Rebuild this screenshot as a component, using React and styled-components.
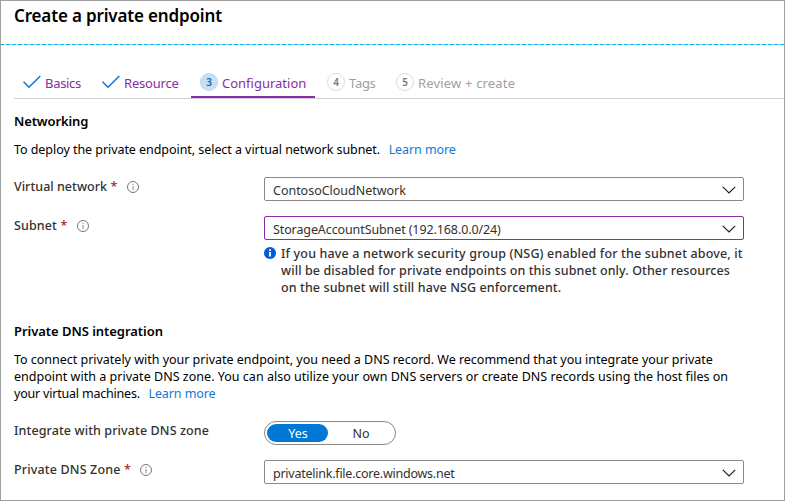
import React from 'react';
import styled, { createGlobalStyle } from 'styled-components';

const GlobalStyle = createGlobalStyle`
  * { box-sizing: border-box; }
  body { margin: 0; background: #fff; }
`;

const Page = styled.main`
  width: 785px;
  height: 501px;
  border: 1px solid #a0a0a0;
  overflow: hidden;
  background: #fff;
  color: #000;
  font: 400 12.5px/17px "Noto Sans", "Open Sans", sans-serif;
  white-space: nowrap;
`;

const Header = styled.header`
  height: 43px;
  padding: 4px 13px 0;
`;

const Title = styled.h1`
  margin: 0;
  font-size: 17px;
  line-height: 22px;
  font-weight: 600;
  letter-spacing: -0.16px;
`;

const Divider = styled.div`
  height: 1px;
  background: repeating-linear-gradient(90deg, #00b4f0 0 3px, #d6dcde 3px 5px, #00b4f0 5px 6px);
`;

const Content = styled.div`
  padding: 23px 0 0 13px;
`;

const Tabs = styled.nav`
  display: flex;
  height: 31px;
  border-bottom: 1px solid #d2d0ce;
`;

const Tab = styled.div`
  display: flex;
  align-items: flex-start;
  width: ${(p) => p.$width}px;
  height: 30px;
  padding: 5px 0 0 ${(p) => p.$indent ?? 9}px;
  gap: 4px;
  border-bottom: 2px solid ${(p) => (p.$active ? '#892da6' : 'transparent')};
  color: ${(p) => (p.$disabled ? '#a19f9d' : '#892da6')};
  font-size: 13px;
  line-height: 21px;
`;

const CheckSlot = styled.span`
  display: flex;
  width: 18px;
  height: 18px;
  padding-top: 2px;
`;

const Step = styled.span`
  flex: none;
  width: 18px;
  height: 18px;
  border-radius: 50%;
  border: 1px solid ${(p) => (p.$active ? '#bcd8f5' : '#dcdcdc')};
  background: ${(p) => (p.$active ? '#c7e0f4' : '#fff')};
  color: ${(p) => (p.$active ? '#1565a8' : '#7a7876')};
  font-size: 10px;
  line-height: 16px;
  font-weight: 600;
  text-align: center;
`;

const Text = styled.span`
  letter-spacing: ${(p) => p.$track ?? 0}px;
`;

const Heading = styled.h2`
  margin: ${(p) => p.$top}px 0 0;
  font-size: 13px;
  line-height: 18px;
  font-weight: 600;
  letter-spacing: ${(p) => p.$track}px;
`;

const Paragraph = styled.div`
  display: flex;
  flex-direction: column;
  margin-top: ${(p) => p.$top}px;
`;

const Line = styled.div`
  display: flex;
  gap: 8.5px;
`;

const Link = styled.a`
  color: #0f78d4;
  letter-spacing: -0.08px;
`;

const Field = styled.div`
  display: grid;
  grid-template-columns: 250px 480px;
  height: 24px;
  margin-top: ${(p) => p.$top}px;
`;

const Label = styled.label`
  display: flex;
  align-items: flex-start;
  height: 20px;
  color: #323130;
  font-weight: 500;
  line-height: 20px;
`;

const Required = styled.span`
  margin-left: 3.5px;
  color: #a4262c;
`;

const Select = styled.div`
  display: flex;
  align-items: center;
  justify-content: space-between;
  height: 24px;
  padding: 2px 8px 0 8px;
  border: 1px solid ${(p) => (p.$focused ? '#892da6' : '#8a8886')};
  border-radius: 2px;
  color: #323130;
`;

const Chevron = styled.svg`
  width: 14px;
  height: 8px;
  margin: -1px -1px 0 0;
`;

const InfoSvg = styled.svg`
  flex: none;
  width: 12px;
  height: 12px;
  margin: 4px 0 0 9.5px;
`;

const Notice = styled.div`
  display: flex;
  gap: 5px;
  margin: 5px 0 0 250px;
  color: #323130;
  font-weight: 500;
`;

const NoticeIcon = styled.svg`
  flex: none;
  width: 12px;
  height: 12px;
  margin-top: 2px;
`;

const NoticeText = styled.div`
  display: flex;
  flex-direction: column;
`;

const Toggle = styled.div`
  display: flex;
  width: 132px;
  height: 24px;
  padding: 2px;
  border: 1px solid #8a8886;
  border-radius: 12px;
`;

const Option = styled.span`
  width: ${(p) => (p.$selected ? 62 : 66)}px;
  height: 18px;
  padding-left: 1px;
  border-radius: 9px;
  background: ${(p) => (p.$selected ? '#0078d4' : 'transparent')};
  color: ${(p) => (p.$selected ? '#fff' : '#323130')};
  line-height: 19px;
  text-align: center;
`;

const Check = () => (
  <svg width="18" height="14" viewBox="0 0 18 14">
    <path d="M0.5 6.7 L6 12.2 L17.3 1" fill="none" stroke="#0f78d4" strokeWidth="1.6" />
  </svg>
);

const Info = () => (
  <InfoSvg viewBox="0 0 12 12">
    <circle cx="6" cy="6" r="5.5" fill="none" stroke="#797775" />
    <path d="M6 5v4.2M6 2.8v1.2" stroke="#8a8886" />
  </InfoSvg>
);

const Dropdown = ({ value, track, focused }) => (
  <Select $focused={focused}>
    <Text $track={track}>{value}</Text>
    <Chevron viewBox="0 0 14 8">
      <path d="M0.8 0.8 L7 7 L13.2 0.8" fill="none" stroke="#201f1e" strokeWidth="1.2" />
    </Chevron>
  </Select>
);

const FieldLabel = ({ text, track, required }) => (
  <Label>
    <Text $track={track}>{text}</Text>
    {required && <Required>*</Required>}
    {required && <Info />}
  </Label>
);

export default function App() {
  return (
    <Page>
      <GlobalStyle />
      <Header>
        <Title>Create a private endpoint</Title>
      </Header>
      <Divider />
      <Content>
        <Tabs>
          <Tab $width={79}>
            <CheckSlot><Check /></CheckSlot>
            <Text $track={-0.3}>Basics</Text>
          </Tab>
          <Tab $width={98}>
            <CheckSlot><Check /></CheckSlot>
            <Text $track={-0.2}>Resource</Text>
          </Tab>
          <Tab $width={124} $active>
            <Step $active>3</Step>
            <Text>Configuration</Text>
          </Tab>
          <Tab $width={72} $indent={12} $disabled>
            <Step>4</Step>
            <Text $track={-0.3}>Tags</Text>
          </Tab>
          <Tab $width={140} $disabled>
            <Step>5</Step>
            <Text $track={0.17}>Review + create</Text>
          </Tab>
        </Tabs>

        <Heading $top={13} $track={-0.12}>Networking</Heading>
        <Paragraph $top={11}>
          <Line>
            <Text $track={-0.055}>To deploy the private endpoint, select a virtual network subnet.</Text>
            <Link>Learn more</Link>
          </Line>
        </Paragraph>

        <Field $top={19}>
          <FieldLabel text="Virtual network" track={0.03} required />
          <Dropdown value="ContosoCloudNetwork" track={-0.02} />
        </Field>
        <Field $top={15}>
          <FieldLabel text="Subnet" track={0.1} required />
          <Dropdown value="StorageAccountSubnet (192.168.0.0/24)" track={-0.105} focused />
        </Field>
        <Notice>
          <NoticeIcon viewBox="0 0 12 12">
            <circle cx="6" cy="6" r="6" fill="#015cda" />
            <path d="M6 5v4.4M6 2.2v1.7" stroke="#fff" strokeWidth="1.8" />
          </NoticeIcon>
          <NoticeText>
            <Text $track={0.155}>If you have a network security group (NSG) enabled for the subnet above, it</Text>
            <Text $track={0.1}>will be disabled for private endpoints on this subnet only. Other resources</Text>
            <Text $track={0.1}>on the subnet will still have NSG enforcement.</Text>
          </NoticeText>
        </Notice>

        <Heading $top={26} $track={-0.04}>Private DNS integration</Heading>
        <Paragraph $top={11}>
          <Text $track={-0.018}>To connect privately with your private endpoint, you need a DNS record. We recommend that you integrate your private</Text>
          <Text $track={0.022}>endpoint with a private DNS zone. You can also utilize your own DNS servers or create DNS records using the host files on</Text>
          <Line>
            <Text $track={-0.2}>your virtual machines.</Text>
            <Link>Learn more</Link>
          </Line>
        </Paragraph>

        <Field $top={19}>
          <FieldLabel text="Integrate with private DNS zone" track={0.11} />
          <Toggle>
            <Option $selected>Yes</Option>
            <Option>No</Option>
          </Toggle>
        </Field>
        <Field $top={15}>
          <FieldLabel text="Private DNS Zone" track={0.16} required />
          <Dropdown value="privatelink.file.core.windows.net" track={-0.24} />
        </Field>
      </Content>
    </Page>
  );
}
